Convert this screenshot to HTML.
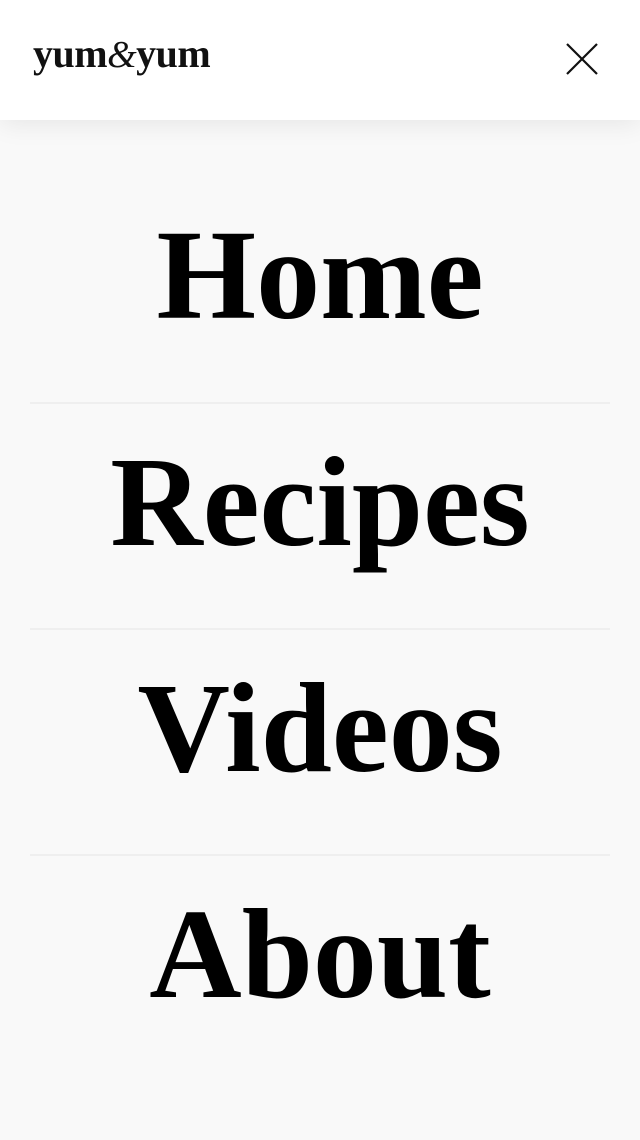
<!DOCTYPE html>
<html><head><meta charset="utf-8"><style>
body{margin:0;width:640px;height:1140px;background:#f9f9f9;overflow:hidden;position:relative;font-family:"Liberation Serif",serif}
.hdr{position:absolute;left:0;top:0;width:640px;height:120px;background:#fff;box-shadow:0 4px 24px rgba(0,0,0,0.08);z-index:2}
.logo{position:absolute;left:33px;top:30px;font-size:40px;font-weight:bold;letter-spacing:-0.5px;color:#111}
.logo i{font-weight:normal;font-size:38px}
.x{position:absolute;left:566px;top:43px}
.item{position:absolute;left:0;width:640px;text-align:center;font-weight:bold;font-size:128px;line-height:1;color:#000}
.sep{position:absolute;left:30px;width:580px;height:2px;background:#efefef}
</style></head><body>
<div class="hdr">
<div class="logo">yum<i>&amp;</i>yum</div>
<svg class="x" width="32" height="32" viewBox="0 0 32 32"><path d="M1 1L31 31M31 1L1 31" stroke="#111" stroke-width="2.2" fill="none"/></svg>
</div>
<div class="item" style="top:211px">Home</div>
<div class="sep" style="top:402px"></div>
<div class="item" style="top:438px">Recipes</div>
<div class="sep" style="top:628px"></div>
<div class="item" style="top:664px">Videos</div>
<div class="sep" style="top:854px"></div>
<div class="item" style="top:890px">About</div>
</body></html>
